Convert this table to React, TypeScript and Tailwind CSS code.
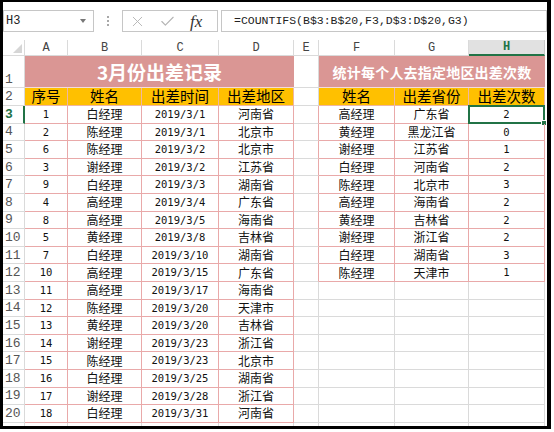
import { X, Check } from "lucide-react";

const COLS = [43, 74, 77, 75, 25, 76, 74, 76];
const LETTERS = ["A", "B", "C", "D", "E", "F", "G", "H"];

const cjk = "font-['Noto_Sans_CJK_SC',sans-serif]";
const mono = "font-['Liberation_Mono',monospace]";
const digits = "font-['DejaVu_Sans_Mono',monospace]";

const PINK = "border-[#e9a9a9]";
const GRID = "border-[#dadada]";

const LEFT = [
  ["1", "白经理", "2019/3/1", "河南省"],
  ["2", "陈经理", "2019/3/1", "北京市"],
  ["6", "陈经理", "2019/3/2", "北京市"],
  ["3", "谢经理", "2019/3/2", "江苏省"],
  ["9", "白经理", "2019/3/3", "湖南省"],
  ["4", "高经理", "2019/3/4", "广东省"],
  ["8", "高经理", "2019/3/5", "海南省"],
  ["5", "黄经理", "2019/3/8", "吉林省"],
  ["7", "白经理", "2019/3/10", "湖南省"],
  ["10", "高经理", "2019/3/15", "广东省"],
  ["11", "高经理", "2019/3/17", "海南省"],
  ["12", "陈经理", "2019/3/20", "天津市"],
  ["13", "黄经理", "2019/3/20", "吉林省"],
  ["14", "谢经理", "2019/3/23", "浙江省"],
  ["15", "陈经理", "2019/3/23", "北京市"],
  ["16", "白经理", "2019/3/25", "湖南省"],
  ["17", "谢经理", "2019/3/28", "浙江省"],
  ["18", "白经理", "2019/3/31", "河南省"],
];

const RIGHT = [
  ["高经理", "广东省", "2"],
  ["黄经理", "黑龙江省", "0"],
  ["谢经理", "江苏省", "1"],
  ["白经理", "河南省", "2"],
  ["陈经理", "北京市", "3"],
  ["高经理", "海南省", "2"],
  ["黄经理", "吉林省", "2"],
  ["谢经理", "浙江省", "2"],
  ["白经理", "湖南省", "3"],
  ["陈经理", "天津市", "1"],
];

const RowHead = ({ n, end, active }: { n?: number; end?: boolean; active?: boolean }) => (
  <div
    className={`w-[22px] shrink-0 flex pl-[2px] border-b ${GRID} ${
      active ? "border-r-2 border-r-[#217346] text-[#217346] font-bold" : `border-r ${GRID} text-[#555]`
    } ${end ? "items-end pb-[1px]" : "items-center"} ${mono} text-[13px] leading-none`}
  >
    {n}
  </div>
);

const Cell = ({ w, border, bg = "", children, num, className = "" }: {
  w: number;
  border: string;
  bg?: string;
  children?: React.ReactNode;
  num?: boolean;
  className?: string;
}) => (
  <div
    style={{ width: w }}
    className={`shrink-0 flex items-center justify-center border-r border-b ${border} ${bg} ${
      num ? `${digits} text-[10.5px]` : `${cjk} text-[12px]`
    } text-[#111] leading-none ${className}`}
  >
    {children}
  </div>
);

export default function App() {
  const rows = [];
  for (let i = 0; i < 19; i++) {
    const r = i + 3;
    const L = LEFT[i];
    const R = RIGHT[i];
    const inRight = r <= 12;
    rows.push(
      <div key={r} className="flex h-[17.6px] shrink-0">
        <RowHead n={r <= 20 ? r : undefined} active={r === 3} />
        {L ? (
          <>
            <Cell w={COLS[0]} border={PINK} num>{L[0]}</Cell>
            <Cell w={COLS[1]} border={PINK}>{L[1]}</Cell>
            <Cell w={COLS[2]} border={PINK} num>{L[2]}</Cell>
            <Cell w={COLS[3]} border={PINK}>{L[3]}</Cell>
          </>
        ) : (
          COLS.slice(0, 4).map((w, k) => <Cell key={k} w={w} border={GRID} />)
        )}
        <Cell w={COLS[4]} border={GRID} className={inRight ? "border-r-[#e9a9a9]" : ""} />
        {R ? (
          <>
            <Cell w={COLS[5]} border={PINK}>{R[0]}</Cell>
            <Cell w={COLS[6]} border={PINK}>{R[1]}</Cell>
            <Cell w={COLS[7]} border={PINK} num className="relative">
              {R[2]}
              {r === 3 && (
                <div className="absolute -left-[1px] -top-[1px] -right-[1px] -bottom-[1px] border-2 border-[#217346]">
                  <div className="absolute -right-[4px] -bottom-[4px] w-[6px] h-[6px] bg-[#217346] border border-white" />
                </div>
              )}
            </Cell>
          </>
        ) : (
          COLS.slice(5).map((w, k) => <Cell key={k} w={w} border={GRID} />)
        )}
      </div>
    );
  }

  return (
    <div className="w-[554px] h-[432px] bg-white overflow-hidden">
      <div className="w-[551px] h-[429px] border-black border-t-2 border-l-[3px] border-r-4 border-b-[3px] flex flex-col overflow-hidden">
        {/* formula bar */}
        <div className="h-[38px] shrink-0 flex items-start pt-[8px] bg-white">
          <div className={`w-[91px] h-[22px] border border-[#c6c6c6] bg-white flex items-center justify-between pl-[2px] pr-[7px] ${mono} text-[12px] text-[#222]`}>
            <span>H3</span>
            <span className="w-0 h-0 border-l-[3.5px] border-r-[3.5px] border-t-[4px] border-l-transparent border-r-transparent border-t-[#777]" />
          </div>
          <div className="w-[28px] h-[22px] flex flex-col items-center justify-center gap-[2px]">
            <span className="w-[2px] h-[2px] bg-[#a8a8a8]" />
            <span className="w-[2px] h-[2px] bg-[#a8a8a8]" />
            <span className="w-[2px] h-[2px] bg-[#a8a8a8]" />
          </div>
          <div className="w-[96px] h-[22px] border border-[#c6c6c6] bg-white flex items-center pl-[6px]">
            <X size={17} strokeWidth={1.3} className="text-[#b4b4b4]" />
            <Check size={17} strokeWidth={1.6} className="text-[#b4b4b4] ml-[13px]" />
            <span className="ml-[14px] font-['Liberation_Serif',serif] italic text-[17px] leading-none text-[#333]">fx</span>
          </div>
          <div className={`ml-[3px] flex-1 h-[22px] border border-[#c6c6c6] bg-white flex items-center pl-[12px] ${mono} text-[11.5px] text-[#222]`}>
            =COUNTIFS(B$3:B$20,F3,D$3:D$20,G3)
          </div>
        </div>

        {/* column headers */}
        <div className="h-[16px] shrink-0 flex">
          <div className={`w-[22px] shrink-0 border-r border-b ${GRID} flex items-end justify-end p-[2px]`}>
            <svg width="9" height="9" viewBox="0 0 9 9">
              <polygon points="9,0 9,9 0,9" fill="#d6d6d6" />
            </svg>
          </div>
          {LETTERS.map((l, k) => (
            <div
              key={l}
              style={{ width: COLS[k] }}
              className={`shrink-0 flex items-center justify-center ${mono} text-[12px] leading-none ${
                l === "H"
                  ? "bg-[#e1e1e1] border-b-2 border-b-[#217346] text-[#217346] font-bold border-r border-r-[#c8c8c8]"
                  : `border-r border-b ${GRID} text-[#444]`
              }`}
            >
              {l}
            </div>
          ))}
        </div>

        {/* sheet */}
        <div className="flex-1 flex flex-col overflow-hidden">
          <div className="flex h-[32px] shrink-0">
            <RowHead n={1} end />
            <div className="w-[269px] shrink-0 bg-[#da9694] border-b border-[#f2dcdb] flex items-center justify-center">
              <span className={`${cjk} text-white font-bold text-[19px] leading-none`}>3月份出差记录</span>
            </div>
            <Cell w={COLS[4]} border={GRID} />
            <div className="w-[226px] shrink-0 bg-[#da9694] border-b border-[#f2dcdb] flex items-center justify-center">
              <span className={`${cjk} text-white font-bold text-[14px] leading-none tracking-[0.2px]`}>统计每个人去指定地区出差次数</span>
            </div>
          </div>
          <div className="flex h-[18px] shrink-0">
            <RowHead n={2} />
            {["序号", "姓名", "出差时间", "出差地区"].map((t, k) => (
              <Cell key={t} w={COLS[k]} border="border-[#efb6a0]" bg="bg-[#ffc000]" className="!text-[14.5px] !text-black">
                {t}
              </Cell>
            ))}
            <Cell w={COLS[4]} border={GRID} />
            {["姓名", "出差省份", "出差次数"].map((t, k) => (
              <Cell key={t + k} w={COLS[5 + k]} border="border-[#efb6a0]" bg="bg-[#ffc000]" className="!text-[14.5px] !text-black">
                {t}
              </Cell>
            ))}
          </div>
          {rows}
        </div>
      </div>
    </div>
  );
}
